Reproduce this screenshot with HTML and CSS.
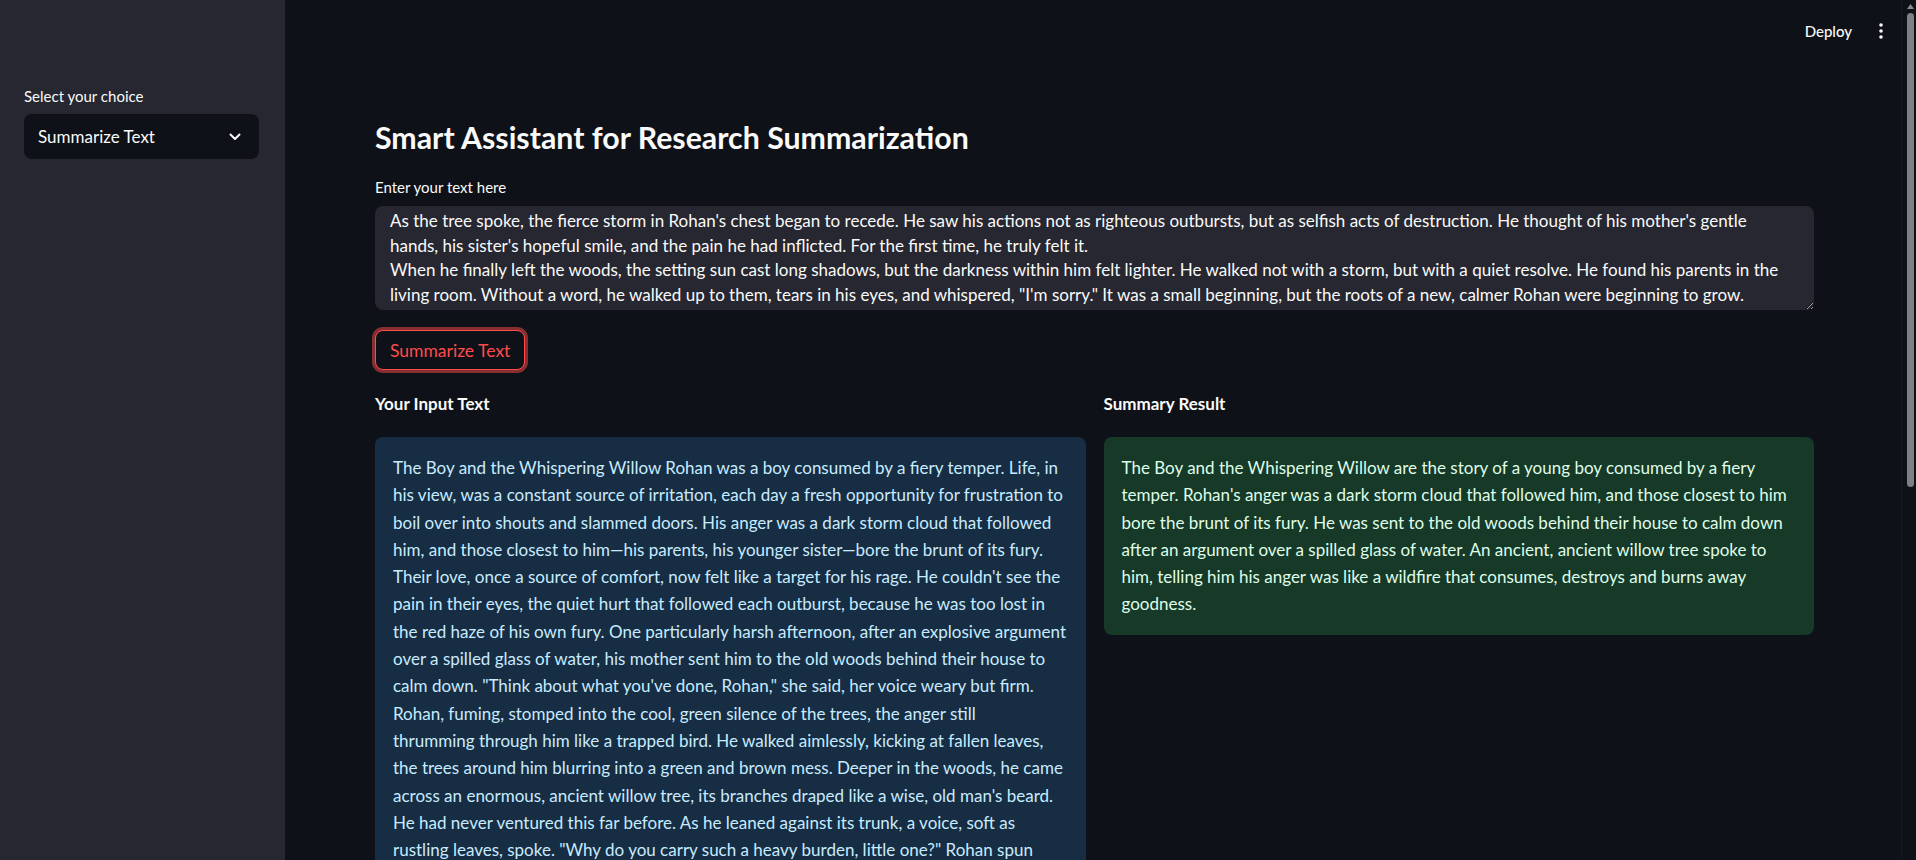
FILE: index.html
```html
<!DOCTYPE html>
<html lang="en">
<head>
<meta charset="utf-8">
<title>Smart Assistant for Research Summarization</title>
<link rel="stylesheet" href="styles.css">
</head>
<body>
<div class="app">
  <aside class="sidebar">
    <label class="side-label">Select your choice</label>
    <div class="select">
      <span>Summarize Text</span>
      <svg class="chev" width="12" height="8" viewBox="0 0 12 8"><path d="M1.5 1.5 L6 6 L10.5 1.5" fill="none" stroke="#fafafa" stroke-width="2" stroke-linecap="round" stroke-linejoin="round"/></svg>
    </div>
  </aside>
  <main class="main">
    <header class="topbar">
      <span class="deploy">Deploy</span>
      <svg class="kebab" width="4" height="16" viewBox="0 0 4 16"><circle cx="2" cy="2" r="1.8" fill="#fafafa"/><circle cx="2" cy="8" r="1.8" fill="#fafafa"/><circle cx="2" cy="14" r="1.8" fill="#fafafa"/></svg>
    </header>
    <section class="content">
      <h1 class="title">Smart Assistant for Research Summarization</h1>
      <label class="field-label" for="txt">Enter your text here</label>
      <textarea id="txt" class="textbox" readonly>As the tree spoke, the fierce storm in Rohan's chest began to recede. He saw his actions not as righteous outbursts, but as selfish acts of destruction. He thought of his mother's gentle hands, his sister's hopeful smile, and the pain he had inflicted. For the first time, he truly felt it.
When he finally left the woods, the setting sun cast long shadows, but the darkness within him felt lighter. He walked not with a storm, but with a quiet resolve. He found his parents in the living room. Without a word, he walked up to them, tears in his eyes, and whispered, "I'm sorry." It was a small beginning, but the roots of a new, calmer Rohan were beginning to grow.</textarea>
      <button class="btn" type="button">Summarize Text</button>
      <div class="cols">
        <div class="col">
          <h3 class="col-title">Your Input Text</h3>
          <div class="card info">The Boy and the Whispering Willow Rohan was a boy consumed by a fiery temper. Life, in his view, was a constant source of irritation, each day a fresh opportunity for frustration to boil over into shouts and slammed doors. His anger was a dark storm cloud that followed him, and those closest to him—his parents, his younger sister—bore the brunt of its fury. Their love, once a source of comfort, now felt like a target for his rage. He couldn't see the pain in their eyes, the quiet hurt that followed each outburst, because he was too lost in the red haze of his own fury. One particularly harsh afternoon, after an explosive argument over a spilled glass of water, his mother sent him to the old woods behind their house to calm down. "Think about what you've done, Rohan," she said, her voice weary but firm. Rohan, fuming, stomped into the cool, green silence of the trees, the anger still<br>thrumming through him like a trapped bird. He walked aimlessly, kicking at fallen leaves,<br>the trees around him blurring into a green and brown mess. Deeper in the woods, he came<br>across an enormous, ancient willow tree, its branches draped like a wise, old man's beard.<br>He had never ventured this far before. As he leaned against its trunk, a voice, soft as<br>rustling leaves, spoke. "Why do you carry such a heavy burden, little one?" Rohan spun<br>around, but saw no one. The voice came again, and he realized it was the willow itself. "Your anger is like a wildfire," the tree whispered. "It consumes everything in its path, destroys what you love, and burns away the goodness inside you." As the tree spoke, the fierce storm in Rohan's chest began to recede. He saw his actions not as righteous outbursts, but as selfish acts of destruction. He thought of his mother's gentle hands, his sister's hopeful smile, and the pain he had inflicted. For the first time, he truly felt it. When he finally left the woods, the setting sun cast long shadows, but the darkness within him felt lighter. He walked not with a storm, but with a quiet resolve. He found his parents in the living room. Without a word, he walked up to them, tears in his eyes, and whispered, "I'm sorry." It was a small beginning, but the roots of a new, calmer Rohan were beginning to grow.</div>
        </div>
        <div class="col">
          <h3 class="col-title">Summary Result</h3>
          <div class="card success">The Boy and the Whispering Willow are the story of a young boy consumed by a fiery temper. Rohan's anger was a dark storm cloud that followed him, and those closest to him bore the brunt of its fury. He was sent to the old woods behind their house to calm down after an argument over a spilled glass of water. An ancient, ancient willow tree spoke to him, telling him his anger was like a wildfire that consumes, destroys and burns away goodness.</div>
        </div>
      </div>
    </section>
  </main>
  <div class="scrollbar" aria-hidden="true">
    <svg class="scroll-arrow" width="7" height="5" viewBox="0 0 7 5"><path d="M0 5 L3.5 0 L7 5 Z" fill="#8a8b8e"/></svg>
    <div class="scroll-thumb"></div>
  </div>
</div>
</body>
</html>
```
FILE: styles.css
```css
html, body {
  margin: 0;
  height: 100%;
  background: #0e1117;
}

body {
  font-family: Lato, "Source Sans Pro", "Noto Sans", sans-serif;
  color: #fafafa;
}

.app {
  display: flex;
  height: 100vh;
  overflow: hidden;
}

.sidebar {
  width: 285px;
  flex: none;
  box-sizing: border-box;
  background: #262730;
  padding: 86px 26px 0 24px;
}

.side-label {
  display: block;
  font-size: 15px;
  line-height: 20px;
  margin-bottom: 8px;
}

.select {
  height: 45px;
  box-sizing: border-box;
  background: #0e1117;
  border-radius: 8px;
  display: flex;
  align-items: center;
  justify-content: space-between;
  padding: 0 18px 0 14px;
  font-size: 17px;
}

.main {
  flex: 1;
  min-width: 0;
  overflow: hidden;
}

.scrollbar {
  width: 15px;
  flex: none;
  box-sizing: border-box;
  background: #0e1117;
  border-left: 1px solid #16181e;
  padding: 4px 0 0 3px;
  display: flex;
  flex-direction: column;
  align-items: center;
}

.scroll-arrow {
  display: block;
  margin-bottom: 4px;
}

.scroll-thumb {
  width: 7px;
  height: 474px;
  border-radius: 4px;
  background: #7f8084;
}

.topbar {
  height: 62px;
  display: flex;
  align-items: center;
  justify-content: flex-end;
  gap: 27px;
  padding-right: 18px;
}

.deploy {
  font-size: 15px;
  font-weight: 500;
}

.kebab {
  display: block;
}

.content {
  padding: 0 87px 170px 90px;
}

.title {
  margin: 57px 0 0;
  font-size: 30.3px;
  line-height: 36px;
  font-weight: 700;
}

.field-label {
  display: block;
  margin-top: 22px;
  font-size: 15px;
  line-height: 20px;
}

.textbox {
  display: block;
  margin-top: 9px;
  width: 100%;
  height: 104px;
  box-sizing: border-box;
  background: #262730;
  color: #fafafa;
  border: none;
  outline: none;
  border-radius: 8px;
  padding: 3px 15px;
  font-family: inherit;
  font-size: 17px;
  line-height: 24.7px;
  resize: vertical;
  overflow: hidden;
  color-scheme: dark;
}

.btn {
  display: block;
  margin-top: 20px;
  height: 40px;
  padding: 0 14px;
  background: #0e1117;
  color: #ff4b4b;
  border: 1px solid #ff4b4b;
  border-radius: 8px;
  box-shadow: 0 0 0 3px rgba(255, 75, 75, 0.5);
  font-family: inherit;
  font-size: 17.5px;
}

.cols {
  margin-top: 20px;
  display: grid;
  grid-template-columns: 1fr 1fr;
  gap: 18px;
  align-items: start;
}

.col-title {
  margin: 0 0 20px;
  font-size: 17px;
  line-height: 27px;
  font-weight: 700;
}

.card {
  border-radius: 8px;
  padding: 17px 17px 17px 18px;
  font-size: 17px;
  line-height: 27.3px;
}

.info {
  background: #172d43;
  color: #c7ebff;
}

.success {
  background: #173928;
  color: #dffde9;
}
```
